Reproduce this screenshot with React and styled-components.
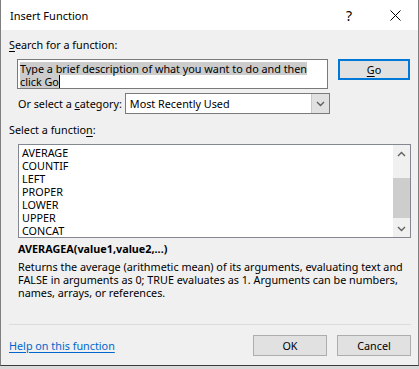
import React from "react";
import styled, { createGlobalStyle } from "styled-components";

const GlobalStyle = createGlobalStyle`
  body {
    margin: 0;
    background: #d9d9d9;
    font-family: "Noto Sans", "Open Sans", sans-serif;
    font-size: 10.8px;
    color: #000;
  }
`;

const Window = styled.div`
  width: 419px;
  height: 366px;
  box-sizing: border-box;
  border: 1px solid #7f7f7f;
  border-top: none;
  border-bottom: 1px solid #3c3c3c;
  background: #f0f0f0;
  display: flex;
  flex-direction: column;
  overflow: hidden;
`;

const TitleBar = styled.div`
  height: 30px;
  flex: none;
  background: #fff;
  display: flex;
  align-items: center;
  padding-left: 9px;
`;

const Title = styled.div`
  flex: 1;
  font-size: 11px;
`;

const TitleButton = styled.div`
  width: 46px;
  height: 30px;
  display: flex;
  align-items: center;
  justify-content: center;
  font-size: ${(p) => p.$size || 13}px;
`;

const Body = styled.div`
  flex: 1;
  display: flex;
  flex-direction: column;
  padding: 7px 7px 0 7px;
`;

const Label = styled.div`
  height: 16px;
  line-height: 16px;
  padding-left: ${(p) => p.$indent || 0}px;
  margin-top: ${(p) => p.$top || 0}px;
  white-space: nowrap;

  u {
    text-decoration: underline;
    text-underline-offset: 2px;
  }
`;

const SearchRow = styled.div`
  display: flex;
  align-items: flex-start;
  margin-top: 6px;
  padding-left: 9px;
`;

const SearchBox = styled.div`
  width: 311px;
  height: 30px;
  box-sizing: border-box;
  border: 1px solid #7a7a7a;
  background: #fff;
  padding: 2px 0 0 2px;
  line-height: 13px;
  white-space: nowrap;
`;

const SearchLine = styled.div`
  height: 13px;
  display: flex;
  align-items: stretch;
`;

const Selected = styled.span`
  display: inline-block;
  height: 13px;
  line-height: 13px;
  background: #cccccc;
`;

const Caret = styled.span`
  display: inline-block;
  width: 1px;
  height: 13px;
  background: #000;
`;

const Button = styled.div`
  width: ${(p) => p.$width || 74}px;
  height: 21px;
  box-sizing: border-box;
  border: ${(p) => (p.$primary ? "2px solid #0078d7" : "1px solid #adadad")};
  background: #e1e1e1;
  display: flex;
  align-items: center;
  justify-content: center;
  margin-left: ${(p) => p.$gap || 0}px;

  u {
    text-underline-offset: 2px;
  }
`;

const CategoryRow = styled.div`
  display: flex;
  align-items: center;
  margin-top: 4px;
  padding-left: 10px;
  gap: 3px;
`;

const Select = styled.div`
  width: 205px;
  height: 21px;
  box-sizing: border-box;
  border: 1px solid #7a7a7a;
  background: #fff;
  display: flex;
  align-items: center;
`;

const SelectValue = styled.div`
  flex: 1;
  padding-left: 4px;
`;

const DropButton = styled.div`
  width: 17px;
  height: 19px;
  background: #e1e1e1;
  border-left: 1px solid #c8c8c8;
  display: flex;
  align-items: center;
  justify-content: center;
`;

const ListBox = styled.div`
  margin: 6px 0 0 10px;
  width: 393px;
  height: 94px;
  box-sizing: border-box;
  border: 1px solid #828790;
  background: #fff;
  display: flex;
`;

const Items = styled.div`
  flex: 1;
  padding: 1px 0 0 3px;
  line-height: 13px;
`;

const ScrollBar = styled.div`
  width: 17px;
  background: #f0f0f0;
  display: flex;
  flex-direction: column;
`;

const ScrollArrow = styled.div`
  height: 17px;
  display: flex;
  align-items: center;
  justify-content: center;
`;

const ScrollTrack = styled.div`
  flex: 1;
  display: flex;
  flex-direction: column;
  padding-top: 16px;
`;

const Thumb = styled.div`
  height: 40px;
  background: #cdcdcd;
`;

const Signature = styled.div`
  font-weight: 700;
  margin: 3px 0 0 10px;
  line-height: 16px;
`;

const Description = styled.div`
  margin: 3px 0 0 10px;
  line-height: 13px;
  white-space: nowrap;
`;

const Separator = styled.div`
  margin-top: auto;
  height: 1px;
  margin-left: 1px;
  width: 402px;
  background: #dcdcdc;
`;

const Footer = styled.div`
  height: 40px;
  display: flex;
  align-items: center;
  padding-left: 1px;
`;

const HelpLink = styled.a`
  flex: 1;
  color: #0066cc;
  text-decoration: underline;
  text-underline-offset: 2px;
`;

const Chevron = ({ up }) => (
  <svg width="9" height="6" viewBox="0 0 9 6">
    <path
      d={up ? "M1 5 L4.5 1.5 L8 5" : "M1 1 L4.5 4.5 L8 1"}
      fill="none"
      stroke="#606060"
      strokeWidth="1.4"
    />
  </svg>
);

const functions = ["AVERAGE", "COUNTIF", "LEFT", "PROPER", "LOWER", "UPPER", "CONCAT"];

export default function App() {
  return (
    <>
      <GlobalStyle />
      <Window>
        <TitleBar>
          <Title>Insert Function</Title>
          <TitleButton $size={14}>?</TitleButton>
          <TitleButton>
            <svg width="11" height="11" viewBox="0 0 11 11">
              <path d="M0.5 0.5 L10.5 10.5 M10.5 0.5 L0.5 10.5" stroke="#000" strokeWidth="1" />
            </svg>
          </TitleButton>
        </TitleBar>
        <Body>
          <Label $indent={1}>
            <u>S</u>earch for a function:
          </Label>
          <SearchRow>
            <SearchBox>
              <SearchLine>
                <Selected>Type a brief description of what you want to do and then</Selected>
              </SearchLine>
              <SearchLine>
                <Selected>click Go</Selected>
                <Caret />
              </SearchLine>
            </SearchBox>
            <Button $primary $width={72} $gap={10}>
              <u>G</u>o
            </Button>
          </SearchRow>
          <CategoryRow>
            <span>
              Or select a <u>c</u>ategory:
            </span>
            <Select>
              <SelectValue>Most Recently Used</SelectValue>
              <DropButton>
                <Chevron />
              </DropButton>
            </Select>
          </CategoryRow>
          <Label $indent={1} $top={8}>
            Select a functio<u>n</u>:
          </Label>
          <ListBox>
            <Items>
              {functions.map((f) => (
                <div key={f}>{f}</div>
              ))}
            </Items>
            <ScrollBar>
              <ScrollArrow>
                <Chevron up />
              </ScrollArrow>
              <ScrollTrack>
                <Thumb />
              </ScrollTrack>
              <ScrollArrow>
                <Chevron />
              </ScrollArrow>
            </ScrollBar>
          </ListBox>
          <Signature>AVERAGEA(value1,value2,...)</Signature>
          <Description>
            Returns the average (arithmetic mean) of its arguments, evaluating text and
            <br />
            FALSE in arguments as 0; TRUE evaluates as 1. Arguments can be numbers,
            <br />
            names, arrays, or references.
          </Description>
          <Separator />
          <Footer>
            <HelpLink>Help on this function</HelpLink>
            <Button>OK</Button>
            <Button $gap={10}>Cancel</Button>
          </Footer>
        </Body>
      </Window>
    </>
  );
}
